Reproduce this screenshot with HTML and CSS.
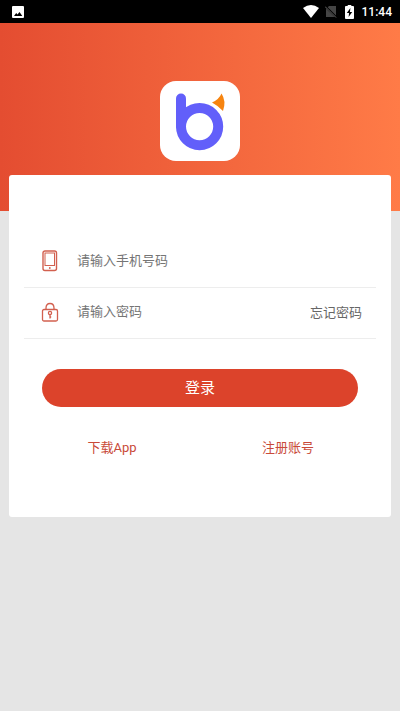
FILE: index.html
```html
<!DOCTYPE html>
<html lang="zh-CN">
<head>
<meta charset="utf-8">
<meta name="viewport" content="width=device-width, initial-scale=1">
<title>登录</title>
<link rel="stylesheet" href="styles.css">
</head>
<body>
<div class="status">
  <svg class="status-picture" width="12" height="12" viewBox="0 0 12 12" aria-hidden="true"><rect width="12" height="12" rx="1" fill="#fff"/><path d="M2 10L4.200 7L5.500 8.500L7.500 6L10.300 10Z" fill="#000"/></svg>
  <svg width="16" height="13" viewBox="0 0 16 13" aria-hidden="true"><path d="M0 3Q8-3 16 3L8 13Z" fill="#fff"/></svg>
  <svg class="status-sim" width="12" height="13" viewBox="0 0 12 13" aria-hidden="true"><path d="M4 1H11V12H1V4Z" fill="#454545"/><path d="M0 1L11.500 12.500" stroke="#000" stroke-width="2"/><path d="M0 1.500L11 12.500" stroke="#666"/></svg>
  <svg class="status-battery" width="9" height="14" viewBox="0 0 10 14" preserveAspectRatio="none" aria-hidden="true"><path d="M3 0H7V1H9Q10 1 10 2V13Q10 14 9 14H1Q0 14 0 13V2Q0 1 1 1H3Z" fill="#fff"/><path d="M6 3L2 8H4.500L4 12L8 7H5.500Z" fill="#000"/></svg>
  <span class="clock">11:44</span>
</div>
<header class="banner">
  <svg class="logo" width="80" height="80" viewBox="0 0 80 80" role="img" aria-label="b">
    <rect width="80" height="80" rx="16" fill="#fff"/>
    <path d="M21 17.500V45" stroke="#625ffa" stroke-width="10" stroke-linecap="round"/>
    <circle cx="39.600" cy="45.600" r="18.600" fill="none" stroke="#625ffa" stroke-width="10"/>
    <path d="M52 21.500Q59 18.500 61.500 12.500Q66.500 20 63 30Q58.500 25 52 21.500Z" fill="#f68410"/>
  </svg>
</header>
<main class="card">
  <form>
    <div class="field">
      <label for="phone" aria-label="手机号码"><svg class="icon" width="18" height="22" viewBox="0 0 18 22" fill="none" stroke="#d2604f"><rect x="2" y="1" width="13.500" height="19.500" rx="2" stroke-width="1.400"/><rect x="4" y="3" width="9.500" height="12.500"/><circle cx="8.800" cy="18" r=".9" fill="#d2604f" stroke="none"/></svg></label>
      <input id="phone" type="tel" placeholder="请输入手机号码">
    </div>
    <div class="field">
      <label for="password" aria-label="密码"><svg class="icon" width="18" height="22" viewBox="0 0 18 22" fill="none" stroke="#d2604f" stroke-width="1.300"><rect x="1.500" y="8.500" width="15" height="11.500" rx="1.500"/><path d="M5 8.500V7Q5 2.500 9 2.500T13 7V8.500"/><circle cx="9" cy="12" r="1.600"/><path d="M9 13.500V17.500M9 16H10.200"/></svg></label>
      <input id="password" type="password" placeholder="请输入密码">
      <a class="forgot" href="#forgot">忘记密码</a>
    </div>
    <button class="login" type="submit">登录</button>
  </form>
  <nav class="links">
    <a href="#download">下载App</a>
    <a href="#register">注册账号</a>
  </nav>
</main>
</body>
</html>
```
FILE: styles.css
```css
* { box-sizing: border-box; }
body {
  margin: 0;
  min-height: 100vh;
  background: #e5e5e5;
  color: #666;
  font: 13px/20px Roboto, "Noto Sans CJK SC", sans-serif;
}
a { color: inherit; text-decoration: none; }
svg { display: block; }
.status {
  display: flex;
  align-items: center;
  height: 23px;
  padding: 0 8px 0 12px;
  background: #000;
}
.status-picture { margin-right: auto; }
.status-sim { margin-left: 6px; }
.status-battery { margin: 0 8px; }
.clock { color: #fff; font-size: 12px; font-weight: 500; }
.banner {
  display: flex;
  justify-content: center;
  height: 188px;
  padding-top: 58px;
  background: linear-gradient(90deg, #e44d31, #ff7b47);
}
.card {
  min-height: 342px;
  margin: -36px 9px 0;
  padding: 62px 15px 58px;
  border-radius: 3px;
  background: #fff;
  position: relative;
}
.field {
  display: flex;
  align-items: center;
  height: 51px;
  padding: 0 14px 2px 17px;
  border-bottom: 1px solid #ededed;
}
.field input {
  flex: 1;
  min-width: 0;
  margin-left: 18px;
  padding: 0;
  border: 0;
  outline: 0;
  background: transparent;
  color: #333;
  font: inherit;
}
.field input::placeholder { color: #757575; opacity: 1; }
.forgot { padding-top: 2px; }
.login {
  display: block;
  width: calc(100% - 36px);
  height: 38px;
  margin: 30px 18px 0;
  padding: 0;
  border: 0;
  border-radius: 19px;
  background: #dc432b;
  color: #fff;
  font: inherit;
  font-size: 15px;
}
.links {
  display: grid;
  grid-template-columns: 1fr 1fr;
  margin-top: 31px;
  color: #c94a39;
  text-align: center;
}
```
